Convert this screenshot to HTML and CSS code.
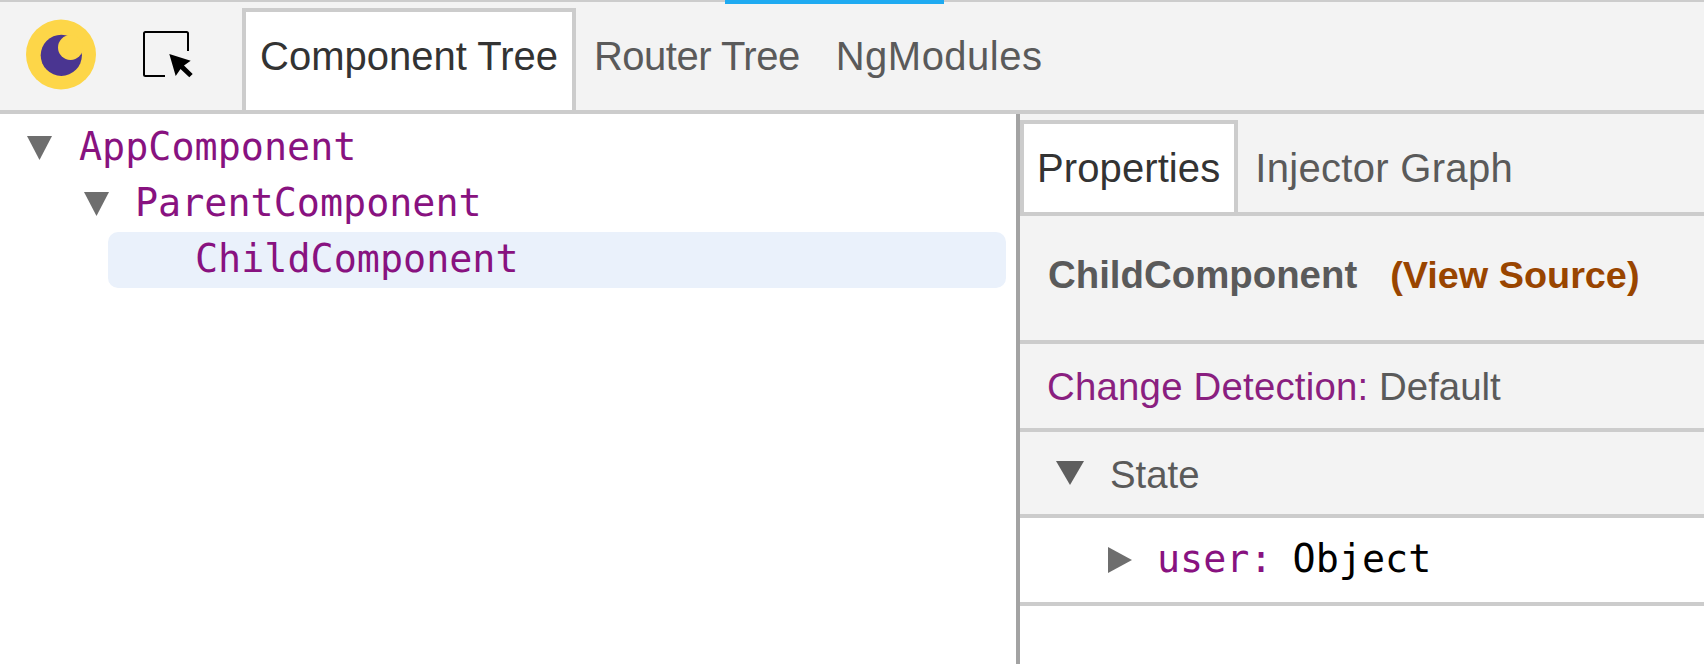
FILE: index.html
```html
<!DOCTYPE html>
<html lang="en">
<head>
<meta charset="utf-8">
<title>Augury</title>
<link rel="stylesheet" href="styles.css">
</head>
<body>
<div class="progress"></div>
<header class="toolbar">
  <svg class="moon" width="70" height="71" viewBox="26 19 70 71">
    <circle cx="61" cy="54.5" r="35" fill="#fdd648"/>
    <circle cx="61.3" cy="55.3" r="20.6" fill="#4a3591"/>
    <circle cx="70.5" cy="47.5" r="12.5" fill="#fdd648"/>
  </svg>
  <svg class="picker" width="50" height="47" viewBox="143 31 50 47">
    <path d="M165 76H145.500Q144 76 144 74.500V33.500Q144 32 145.500 32H186.500Q188 32 188 33.500V51" fill="none" stroke="#000" stroke-width="2"/>
    <path d="M169.300 54L190.700 60.700L184 65.500L192.700 74L189.300 77.300L180.500 69L175.700 76Z" fill="#000"/>
  </svg>
  <nav class="tabs">
    <span class="tab active">Component Tree</span>
    <span class="tab router">Router Tree</span>
    <span class="tab modules">NgModules</span>
  </nav>
</header>
<main class="split">
  <section class="tree">
    <div class="node"><svg class="caret" width="25" height="24" viewBox="0 0 25 24"><path d="M0 0H25L12.500 24Z"/></svg><span class="name">AppComponent</span></div>
    <div class="node depth1"><svg class="caret" width="25" height="24" viewBox="0 0 25 24"><path d="M0 0H25L12.500 24Z"/></svg><span class="name">ParentComponent</span></div>
    <div class="node selected"><span class="name">ChildComponent</span></div>
  </section>
  <aside class="panel">
    <nav class="subtabs">
      <span class="subtab active">Properties</span>
      <span class="subtab injector">Injector Graph</span>
    </nav>
    <div class="heading"><strong class="title">ChildComponent</strong><a class="source">(View Source)</a></div>
    <div class="detection"><span class="label">Change Detection:</span> Default</div>
    <div class="state"><svg class="caret dark" width="28" height="24" viewBox="0 0 28 24"><path d="M0 0H28L14 24Z"/></svg><span class="state-name">State</span></div>
    <div class="prop"><svg class="caret" width="24" height="26" viewBox="0 0 24 26"><path d="M0 0L24 13L0 26Z"/></svg><span class="key">user:</span><span class="value">Object</span></div>
  </aside>
</main>
</body>
</html>
```
FILE: styles.css
```css
* { box-sizing: border-box; }
html, body { margin: 0; height: 100%; }
body {
  position: relative;
  height: 664px;
  overflow: hidden;
  display: flex;
  flex-direction: column;
  background: #fff;
  font-family: "Liberation Sans", Arial, sans-serif;
  font-size: 38.4px;
  color: #5a5a5a;
}
.progress {
  position: absolute;
  left: 725px;
  top: 0;
  width: 219px;
  height: 4px;
  background: #1eaaf1;
}
.toolbar {
  flex: none;
  height: 114px;
  display: flex;
  align-items: flex-start;
  background: #f3f3f3;
  border-top: 2px solid #ccc;
  border-bottom: 4px solid #ccc;
  padding-left: 26px;
}
.moon { flex: none; margin-top: 17px; }
.picker { flex: none; margin: 29px 0 0 47px; }
.tabs { display: flex; margin: 6px 0 0 49px; height: 102px; font-size: 40px; }
.tab {
  padding: 0 18px;
  line-height: 88px;
  border-top: 4px solid transparent;
}
.tab.active {
  background: #fff;
  color: #333;
  border: 4px solid #ccc;
  border-bottom: 0;
  padding: 0 14px;
}
.router { letter-spacing: -0.5px; }
.modules { letter-spacing: 0.5px; }
.split { flex: 1; display: flex; min-height: 0; }
.tree { width: 1016px; flex: none; padding: 6px 10px 0 0; }
.node {
  height: 56px;
  display: flex;
  align-items: center;
  padding-left: 27px;
  font-family: "DejaVu Sans Mono", monospace;
}
.name { color: #881280; margin-left: 27px; padding-bottom: 4px; }
.depth1 { padding-left: 84px; }
.depth1 .name { margin-left: 26px; }
.selected {
  margin-left: 108px;
  padding-left: 60px;
  background: #eaf1fb;
  border-radius: 10px;
}
.panel {
  flex: 1;
  display: flex;
  flex-direction: column;
  background: #fff;
  border-left: 4px solid #a3a3a3;
}
.panel > * { flex: none; border-bottom: 4px solid #ccc; }
.caret { flex: none; fill: #6e6e6e; }
.caret.dark { fill: #5e5e5e; }
.subtabs {
  height: 102px;
  display: flex;
  padding-top: 6px;
  background: #f3f3f3;
  font-size: 40px;
}
.subtab {
  padding: 0 16px;
  line-height: 88px;
  border-top: 4px solid transparent;
}
.subtab.active {
  background: #fff;
  color: #333;
  border: 4px solid #ccc;
  border-bottom: 0;
  padding: 0 14px 0 13px;
  letter-spacing: 0.1px;
}
.injector { padding-left: 17px; letter-spacing: 0.3px; }
.heading {
  height: 128px;
  display: flex;
  align-items: center;
  gap: 33px;
  padding: 0 0 6px 28px;
  background: #f3f3f3;
  font-weight: 700;
}
.source { color: #994500; font-size: 37.8px; }
.detection {
  height: 88px;
  padding-left: 27px;
  line-height: 85px;
  background: #f3f3f3;
}
.label { color: #8a1f80; letter-spacing: 0.2px; }
.state {
  height: 86px;
  display: flex;
  align-items: center;
  gap: 26px;
  padding-left: 36px;
  background: #f3f3f3;
}
.state-name { padding-top: 4px; }
.prop {
  height: 88px;
  display: flex;
  align-items: center;
  padding-left: 88px;
  font-family: "DejaVu Sans Mono", monospace;
}
.key { color: #881280; margin: 0 20px 0 25px; padding-bottom: 4px; }
.value { color: #000; padding-bottom: 4px; }
```
